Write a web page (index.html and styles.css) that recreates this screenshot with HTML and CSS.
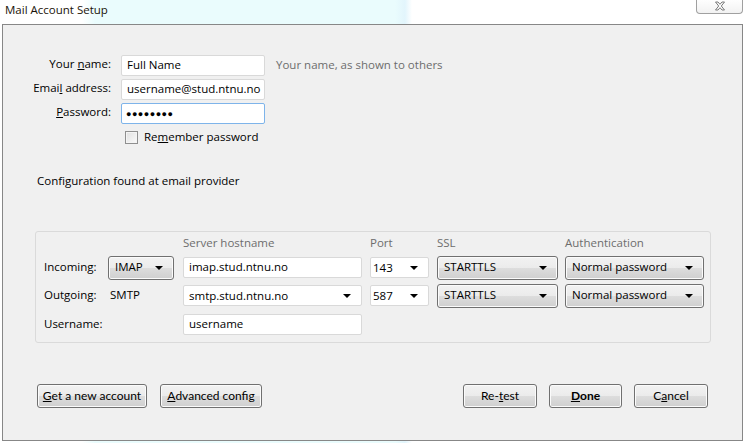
FILE: index.html
```html
<!DOCTYPE html>
<html>
<head>
<meta charset="utf-8">
<link rel="stylesheet" href="styles.css">
</head>
<body>
<div class="window">
  <div class="titlebar">
    <span class="title">Mail Account Setup</span>
    <div class="close">
      <svg width="12" height="10" viewBox="0 0 12 10"><path d="M1.5 1 L4 1 L6 3.3 L8 1 L10.5 1 L7.3 5 L10.5 9 L8 9 L6 6.7 L4 9 L1.5 9 L4.7 5 Z" fill="#fff" stroke="#7a7a7a" stroke-width="1" stroke-linejoin="round"/></svg>
    </div>
  </div>
  <div class="panel">
    <div class="identity">
      <label class="lbl">Your <u>n</u>ame:</label>
      <div class="input">Full Name</div>
      <span class="hint">Your name, as shown to others</span>

      <label class="lbl">Emai<u>l</u> address:</label>
      <div class="input">username@stud.ntnu.no</div>
      <span></span>

      <label class="lbl"><u>P</u>assword:</label>
      <div class="input focused dots">&#9679;&#9679;&#9679;&#9679;&#9679;&#9679;&#9679;&#9679;</div>
      <span></span>

      <span></span>
      <div class="remember"><span class="checkbox"></span><span>Re<u>m</u>ember password</span></div>
      <span></span>
    </div>

    <div class="status">Configuration found at email provider</div>

    <div class="servers">
      <span></span><span></span>
      <span class="colhead">Server hostname</span>
      <span class="colhead">Port</span>
      <span class="colhead">SSL</span>
      <span class="colhead">Authentication</span>

      <span class="rowlbl">Incoming:</span>
      <div class="btn drop w-type"><span>IMAP</span><i class="arrow"></i></div>
      <div class="input w-host">imap.stud.ntnu.no</div>
      <div class="input combo w-port"><span>143</span><i class="arrow"></i></div>
      <div class="btn drop w-ssl"><span>STARTTLS</span><i class="arrow"></i></div>
      <div class="btn drop w-auth"><span>Normal password</span><i class="arrow"></i></div>

      <span class="rowlbl">Outgoing:</span>
      <span class="smtp">SMTP</span>
      <div class="input combo w-host"><span>smtp.stud.ntnu.no</span><i class="arrow"></i></div>
      <div class="input combo w-port"><span>587</span><i class="arrow"></i></div>
      <div class="btn drop w-ssl"><span>STARTTLS</span><i class="arrow"></i></div>
      <div class="btn drop w-auth"><span>Normal password</span><i class="arrow"></i></div>

      <span class="rowlbl">Username:</span>
      <span></span>
      <div class="input w-host">username</div>
      <span></span><span></span><span></span>
    </div>

    <div class="actions">
      <div class="group">
        <div class="btn push w-new"><u>G</u>et a new account</div>
        <div class="btn push w-adv"><u>A</u>dvanced config</div>
      </div>
      <div class="group right">
        <div class="btn push w-small">Re-<u>t</u>est</div>
        <div class="btn push w-done bold"><u>D</u>one</div>
        <div class="btn push w-small">C<u>a</u>ncel</div>
      </div>
    </div>
  </div>
</div>
</body>
</html>
```
FILE: styles.css
```css
html, body {
  margin: 0;
  padding: 0;
}
body {
  width: 745px;
  height: 443px;
  overflow: hidden;
  font-family: "Open Sans", "Noto Sans", sans-serif;
  font-size: 11.5px;
  color: #000;
  background: linear-gradient(90deg, #ffffff 0px, #ffffff 82px, #eafcfd 95px, #eafcfd 395px, #e2f5fc 405px, #ffffff 412px, #ffffff 745px);
}
u { text-decoration: underline; text-underline-offset: 1px; }

.window {
  display: flex;
  flex-direction: column;
  height: 443px;
}
.titlebar {
  height: 24px;
  display: flex;
  justify-content: space-between;
  align-items: flex-start;
}
.title {
  padding: 1px 0 0 5px;
  font-size: 11.5px;
  color: #1a1208;
  line-height: 18px;
}
.close {
  width: 45px;
  height: 14px;
  margin: -1px 2px 0 0;
  border: 1px solid #a0a0a0;
  border-top: none;
  border-radius: 0 0 4px 4px;
  background: linear-gradient(#ffffff, #f2f2f2);
  display: flex;
  align-items: center;
  justify-content: center;
}

.panel {
  margin: 0 2px 0 2px;
  height: 415px;
  border: 1px solid #878787;
  background: #f0f0f0;
  display: flex;
  flex-direction: column;
}

.identity {
  display: grid;
  grid-template-columns: 108px 144px auto;
  grid-auto-rows: 24px;
  column-gap: 10px;
  align-items: center;
  margin-top: 28px;
}
.lbl {
  text-align: right;
  color: #000;
  line-height: 16px;
  margin-top: -2px;
}
.hint {
  color: #6d6d6d;
  padding-left: 1px;
  margin-top: -2px;
}
.input {
  box-sizing: border-box;
  height: 21px;
  background: #fff;
  border: 1px solid #d9d9d9;
  border-radius: 2px;
  padding: 0 5px;
  line-height: 17px;
  white-space: nowrap;
  overflow: hidden;
}
.input.focused {
  border-color: #7eb4ea;
}
.input.dots {
  font-size: 9px;
  letter-spacing: 0.5px;
  padding-left: 4px;
  line-height: 19px;
}
.remember {
  display: flex;
  align-items: center;
  gap: 6px;
  padding-left: 4px;
}
.remember span:last-child { margin-top: -2px; }
.checkbox {
  box-sizing: border-box;
  width: 13px;
  height: 13px;
  border: 1px solid #8f8f8f;
  background: linear-gradient(135deg, #e0e0e0, #fafafa);
  box-shadow: inset 0 0 0 1px #f4f4f4;
}

.status {
  margin: 24px 0 0 34px;
  line-height: 16px;
}

.servers {
  box-sizing: border-box;
  margin: 42px 31px 0 32px;
  height: 112px;
  border: 1px solid #dadada;
  border-radius: 3px;
  display: grid;
  grid-template-columns: 72px 75px 187px 67px 128px 139px;
  grid-template-rows: 22px 27px 29px 28px;
  align-items: center;
}
.colhead { color: #6d6d6d; margin-top: -2px; }
.rowlbl { padding-left: 8px; margin-top: -2px; }
.smtp { padding-left: 2px; margin-top: -2px; }

.w-type { width: 66px; }
.w-host { width: 179px; }
.w-port { width: 59px; }
.w-ssl { width: 121px; }
.w-auth { width: 139px; }

.btn {
  box-sizing: border-box;
  height: 24px;
  border: 1px solid #707070;
  border-radius: 3px;
  background: linear-gradient(#f2f2f2 0%, #ebebeb 50%, #dddddd 51%, #cfcfcf 100%);
  box-shadow: inset 0 0 0 1px #fbfbfb;
  display: flex;
  align-items: center;
  line-height: 16px;
}
.btn span { margin-top: -2px; }
.drop {
  justify-content: space-between;
  padding: 0 10px 0 6px;
  height: 24px;
}
.combo {
  display: flex;
  align-items: center;
  justify-content: space-between;
  padding-right: 10px;
}
.combo span { margin-top: -1px; }
.w-port { padding-left: 2px; }
.arrow {
  display: block;
  width: 0;
  height: 0;
  border-left: 4px solid transparent;
  border-right: 4px solid transparent;
  border-top: 4px solid #000;
  margin-top: 1px;
}

.actions {
  margin: 41px 34px 0 34px;
  display: flex;
  justify-content: space-between;
}
.group {
  display: flex;
  gap: 13px;
}
.group.right { gap: 12px; }
.push {
  justify-content: center;
  font-family: "Lato", "Open Sans", sans-serif;
  font-size: 12px;
  padding-bottom: 1px;
}
.w-new { width: 110px; }
.w-adv { width: 102px; }
.w-small { width: 74px; }
.w-done { width: 73px; }
.bold { font-weight: bold; }
```
